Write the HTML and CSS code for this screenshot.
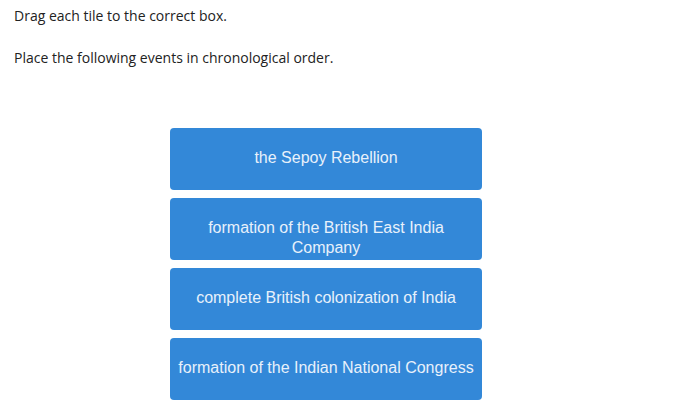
FILE: index.html
```html
<!DOCTYPE html>
<html>
<head>
<meta charset="utf-8">
<link rel="stylesheet" href="styles.css">
</head>
<body>
<p class="instr">Drag each tile to the correct box.</p>
<p class="instr">Place the following events in chronological order.</p>
<div class="tiles">
  <div class="tile">the Sepoy Rebellion</div>
  <div class="tile">formation of the British East India Company</div>
  <div class="tile">complete British colonization of India</div>
  <div class="tile">formation of the Indian National Congress</div>
</div>
</body>
</html>
```
FILE: styles.css
```css
html, body { margin: 0; padding: 0; background: #fff; }
body { padding: 6px 14px; font-family: "Open Sans", sans-serif; color: #222; }
.instr { margin: 0 0 22px 0; font-size: 14px; line-height: 20px; }
.tiles {
  margin-top: 60px;
  margin-left: 156px;
  width: 312px;
  display: flex;
  flex-direction: column;
  gap: 8px;
}
.tile {
  box-sizing: border-box;
  height: 62px;
  padding: 20px 6px 0;
  background: #3388d8;
  border-radius: 4px;
  color: #e8f1fb;
  font-family: "Liberation Sans", Arial, sans-serif;
  font-size: 16px;
  line-height: 20px;
  text-align: center;
}
```
